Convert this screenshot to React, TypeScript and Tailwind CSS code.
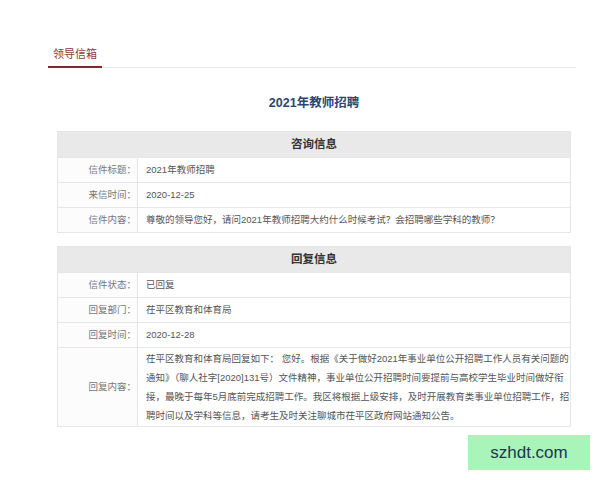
import React from "react";

const font = { fontFamily: '"Liberation Sans", "Noto Sans CJK SC", sans-serif' };

function Row({ label, children, tall }: { label: string; children: React.ReactNode; tall?: boolean }) {
  return (
    <div className={`flex border-t border-[#e6e6e6] ${tall ? "" : "h-[25px]"}`}>
      <div className="w-[80px] shrink-0 flex items-center justify-end pr-[1px] text-[9.5px] text-[#777] bg-[#fcfcfc] border-r border-[#e6e6e6]">
        {label}
      </div>
      <div className={`flex-1 pl-[8px] text-[9.5px] text-[#555] ${tall ? "pt-[1px] pb-[1px] leading-[19px]" : "flex items-center"}`}>
        {children}
      </div>
    </div>
  );
}

function Section({ title, children }: { title: string; children: React.ReactNode }) {
  return (
    <div className="border border-[#e6e6e6] bg-white">
      <div className="h-[25px] bg-[#e9e9e9] flex items-center justify-center text-[11.5px] font-bold text-[#333]">
        {title}
      </div>
      {children}
    </div>
  );
}

export default function App() {
  return (
    <div className="relative w-[600px] h-[480px] bg-white overflow-hidden" style={font}>
      <div className="pt-[47px] pl-[48px]">
        <div className="w-[528px] border-b border-[#e8e8e8] flex">
          <div className="px-[5px] pb-[5px] text-[11px] leading-[14px] text-[#8a3b3b] border-b-2 border-[#7a2a2a] -mb-px">
            领导信箱
          </div>
        </div>
      </div>
      <div className="ml-[57px] w-[514px]">
        <div className="mt-[26px] text-center text-[12.5px] font-bold text-[#2d4670] leading-[18px]">
          2021年教师招聘
        </div>
        <div className="mt-[19px]">
          <Section title="咨询信息">
            <Row label="信件标题：">2021年教师招聘</Row>
            <Row label="来信时间：">2020-12-25</Row>
            <Row label="信件内容：">尊敬的领导您好，请问2021年教师招聘大约什么时候考试？会招聘哪些学科的教师？</Row>
          </Section>
        </div>
        <div className="h-[13px]" />
        <Section title="回复信息">
          <Row label="信件状态：">已回复</Row>
          <Row label="回复部门：">茌平区教育和体育局</Row>
          <Row label="回复时间：">2020-12-28</Row>
          <Row label="回复内容：" tall>
            <div className="whitespace-nowrap">茌平区教育和体育局回复如下： 您好。根据《关于做好2021年事业单位公开招聘工作人员有关问题的</div>
            <div className="whitespace-nowrap">通知》（聊人社字[2020]131号）文件精神，事业单位公开招聘时间要提前与高校学生毕业时间做好衔</div>
            <div className="whitespace-nowrap">接，最晚于每年5月底前完成招聘工作。我区将根据上级安排，及时开展教育类事业单位招聘工作，招</div>
            <div className="whitespace-nowrap">聘时间以及学科等信息，请考生及时关注聊城市茌平区政府网站通知公告。</div>
          </Row>
        </Section>
      </div>
      <div className="absolute left-[468px] top-[435px] w-[122px] h-[35px] bg-[#a9f5b9] flex items-center justify-center text-[17px] text-[#1c3550]">
        szhdt.com
      </div>
    </div>
  );
}
